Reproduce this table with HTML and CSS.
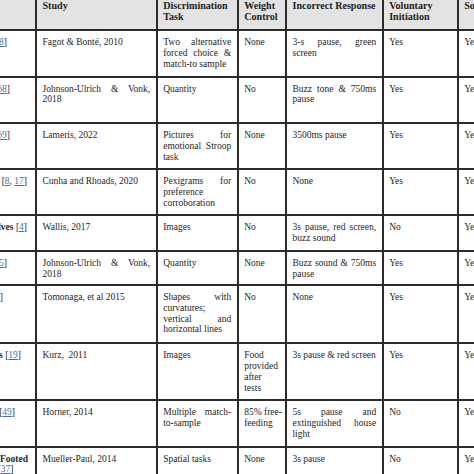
FILE: index.html
```html
<!DOCTYPE html>
<html lang="en">
<head>
<meta charset="utf-8">
<title>Touchscreen studies</title>
<link rel="stylesheet" href="styles.css">
</head>
<body>
<div class="wrap">
<table class="studies">
  <colgroup>
    <col class="c-species">
    <col class="c-study">
    <col class="c-task">
    <col class="c-weight">
    <col class="c-resp">
    <col class="c-init">
    <col class="c-social">
  </colgroup>
  <thead>
    <tr>
      <th class="sp-h">Species</th>
      <th>Study</th>
      <th>Discrimination<br>Task</th>
      <th>Weight<br>Control</th>
      <th>Incorrect Response</th>
      <th>Voluntary<br>Initiation</th>
      <th>Social</th>
    </tr>
  </thead>
  <tbody>
    <tr>
      <td class="sp e7"><b>Baboons</b> [<a>58</a>]</td>
      <td>Fagot &amp; Bonté, 2010</td>
      <td>Two alternative forced choice &amp; match-to sample</td>
      <td>None</td>
      <td>3-s pause, green screen</td>
      <td>Yes</td>
      <td>Yes</td>
    </tr>
    <tr>
      <td class="sp e10"><b>Hyenas</b> [<a>68</a>]</td>
      <td>Johnson-Ulrich &amp; Vonk, 2018</td>
      <td>Quantity</td>
      <td>No</td>
      <td>Buzz tone &amp; 750ms pause</td>
      <td>Yes</td>
      <td>Yes</td>
    </tr>
    <tr>
      <td class="sp e10"><b>Bonobos</b> [<a>69</a>]</td>
      <td>Lameris, 2022</td>
      <td>Pictures for emotional Stroop task</td>
      <td>None</td>
      <td>3500ms pause</td>
      <td>Yes</td>
      <td>Yes</td>
    </tr>
    <tr>
      <td class="sp e27"><b>Parrots</b> [<a>8</a>, <a>17</a>]</td>
      <td>Cunha and Rhoads, 2020</td>
      <td>Pexigrams for preference corroboration</td>
      <td>No</td>
      <td>None</td>
      <td>Yes</td>
      <td>Yes</td>
    </tr>
    <tr>
      <td class="sp e27"><b>Wolves</b> [<a>4</a>]</td>
      <td>Wallis, 2017</td>
      <td>Images</td>
      <td>No</td>
      <td>3s pause, red screen, buzz sound</td>
      <td>No</td>
      <td>Yes</td>
    </tr>
    <tr>
      <td class="sp e7"><b>Bears</b> [<a>65</a>]</td>
      <td>Johnson-Ulrich &amp; Vonk, 2018</td>
      <td>Quantity</td>
      <td>None</td>
      <td>Buzz sound &amp; 750ms pause</td>
      <td>Yes</td>
      <td>Yes</td>
    </tr>
    <tr>
      <td class="sp e3"><b>Dolphins</b> [<a>70</a>]</td>
      <td>Tomonaga, et al 2015</td>
      <td>Shapes with curvatures; vertical and horizontal lines</td>
      <td>No</td>
      <td>None</td>
      <td>Yes</td>
      <td>Yes</td>
    </tr>
    <tr>
      <td class="sp e21"><b>Rats</b> [<a>19</a>]</td>
      <td>Kurz, &nbsp;2011</td>
      <td>Images</td>
      <td>Food provided after tests</td>
      <td>3s pause &amp; red screen</td>
      <td>Yes</td>
      <td>Yes</td>
    </tr>
    <tr>
      <td class="sp e15"><b>Pigeons</b> [<a>49</a>]</td>
      <td>Horner, 2014</td>
      <td>Multiple match-to-sample</td>
      <td><span class="nw">85% free-</span>feeding</td>
      <td>5s pause and extinguished house light</td>
      <td>No</td>
      <td>Yes</td>
    </tr>
    <tr>
      <td class="sp"><div class="ln e28"><b>Red-Footed</b></div><div class="ln e12"><b>tortoises</b> [<a>37</a>]</div></td>
      <td>Mueller-Paul, 2014</td>
      <td>Spatial tasks</td>
      <td>None</td>
      <td>3s pause</td>
      <td>No</td>
      <td>Yes</td>
    </tr>
  </tbody>
</table>
</div>
</body>
</html>
```
FILE: styles.css
```css
html, body {
  margin: 0;
  padding: 0;
  background: #ffffff;
  overflow: hidden;
}

.wrap {
  margin: -7px 0 0 -60px;
}

.studies {
  table-layout: fixed;
  border-collapse: collapse;
  width: 577px;
  font-family: "Liberation Serif", "Times New Roman", serif;
  font-size: 9.5px;
  line-height: 10.8px;
  color: #1e1e1e;
}

.c-species { width: 95px; }
.c-study { width: 120.7px; }
.c-task { width: 81px; }
.c-weight { width: 48.3px; }
.c-resp { width: 96.7px; }
.c-init { width: 75px; }
.c-social { width: 60.3px; }

.studies th,
.studies td {
  border: 2px solid #2b2b2b;
  vertical-align: top;
  padding: 6px 5.5px 0 5.5px;
  overflow: hidden;
}

.studies th {
  background: #e3e3e3;
  font-weight: bold;
  font-size: 10.1px;
  line-height: 10.7px;
  text-align: left;
  white-space: nowrap;
  height: 28px;
}

.studies td {
  text-align: justify;
}

.studies a {
  color: #3f6fb3;
  text-decoration: underline;
}

.studies td.sp {
  text-align: right;
  white-space: nowrap;
}

.ln { text-align: right; }

.e3 { padding-right: 32px !important; }
.e7 { padding-right: 28px !important; }
.e10 { padding-right: 25px !important; }
.e12 { padding-right: 22px !important; }
.e15 { padding-right: 20px !important; }
.e21 { padding-right: 14px !important; }
.e27 { padding-right: 8px !important; }
.e28 { padding-right: 7px !important; }
.ln.e28 { padding-right: 1.5px !important; }
.ln.e12 { padding-right: 16px !important; }

.nw { white-space: nowrap; }

tbody tr:nth-child(1) { height: 46.7px; }
tbody tr:nth-child(2) { height: 46.7px; }
tbody tr:nth-child(3) { height: 45.6px; }
tbody tr:nth-child(4) { height: 46px; }
tbody tr:nth-child(5) { height: 36px; }
tbody tr:nth-child(6) { height: 34px; }
tbody tr:nth-child(7) { height: 58.4px; }
tbody tr:nth-child(8) { height: 56.6px; }
tbody tr:nth-child(9) { height: 46.7px; }
tbody tr:nth-child(10) { height: 40px; }
```
